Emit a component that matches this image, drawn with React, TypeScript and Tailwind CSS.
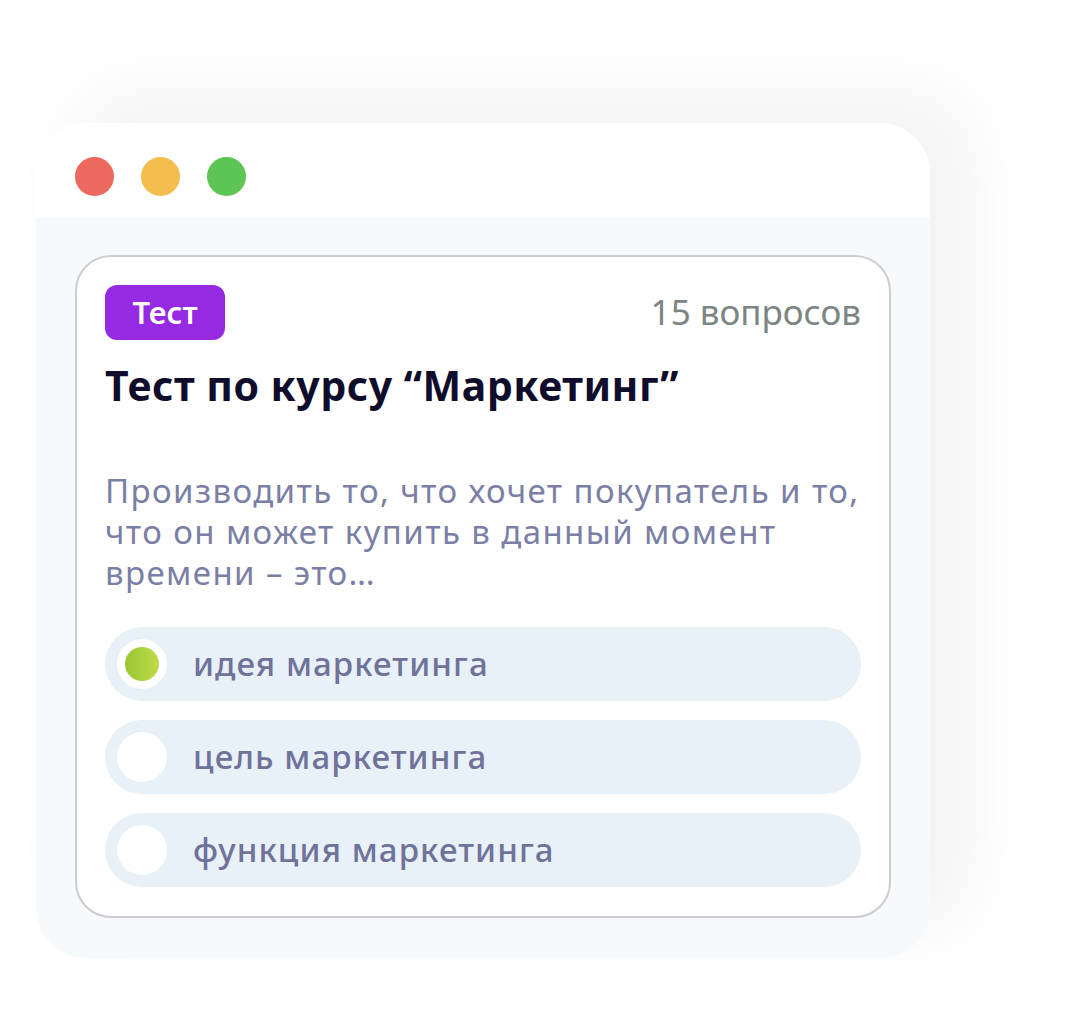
const options = [
  { label: 'идея маркетинга', checked: true },
  { label: 'цель маркетинга', checked: false },
  { label: 'функция маркетинга', checked: false },
];

export default function App() {
  return (
    <div className="min-h-screen bg-white pl-[36px] pt-[123px] font-['Noto_Sans','Open_Sans',sans-serif]">
      <div className="w-[894px] overflow-hidden rounded-[50px] bg-[#f6fafd] shadow-[40px_-30px_70px_rgba(0,0,0,0.05)]">
        <div className="flex h-[95px] gap-[27px] bg-white pl-[39px] pt-[34px]">
          <span className="h-[39px] w-[39px] rounded-full bg-[#ee695d]" />
          <span className="h-[39px] w-[39px] rounded-full bg-[#f4be4f]" />
          <span className="h-[39px] w-[39px] rounded-full bg-[#5ec454]" />
        </div>

        <div className="pb-[40px] pl-[39px] pr-[39px] pt-[37px]">
          <div className="rounded-[36px] border-2 border-[#cdcdd1] bg-white px-[28px] pb-[29px] pt-[28px]">
            <div className="flex items-center justify-between">
              <span className="flex h-[55px] w-[120px] items-center justify-center rounded-[12px] bg-[#962ae2] text-[31px] font-semibold text-white">
                Тест
              </span>
              <span className="text-[35px] text-[#7b8582]">15 вопросов</span>
            </div>

            <h1 className="mt-[21px] text-[41px] font-bold leading-[48px] tracking-[0.5px] text-[#100d2c]">
              Тест по курсу “Маркетинг”
            </h1>

            <p className="mt-[61px] whitespace-nowrap text-[33px] leading-[41px] tracking-[1.4px] text-[#7b7fa5]">
              Производить то, что хочет покупатель и то,
              <br />
              что он может купить в данный момент
              <br />
              времени – это…
            </p>

            <div className="mt-[34px] flex flex-col gap-[19px]">
              {options.map((o) => (
                <div
                  key={o.label}
                  className="flex h-[74px] items-center gap-[26px] rounded-full bg-[#e8f0f8] pl-[12px]"
                >
                  <span className="flex h-[50px] w-[50px] items-center justify-center rounded-full bg-white">
                    {o.checked && (
                      <span className="h-[34px] w-[34px] rounded-full bg-gradient-to-r from-[#98c62e] to-[#bfdb4a]" />
                    )}
                  </span>
                  <span className="text-[33px] font-medium tracking-[1.1px] text-[#6f7299]">{o.label}</span>
                </div>
              ))}
            </div>
          </div>
        </div>
      </div>
    </div>
  );
}
